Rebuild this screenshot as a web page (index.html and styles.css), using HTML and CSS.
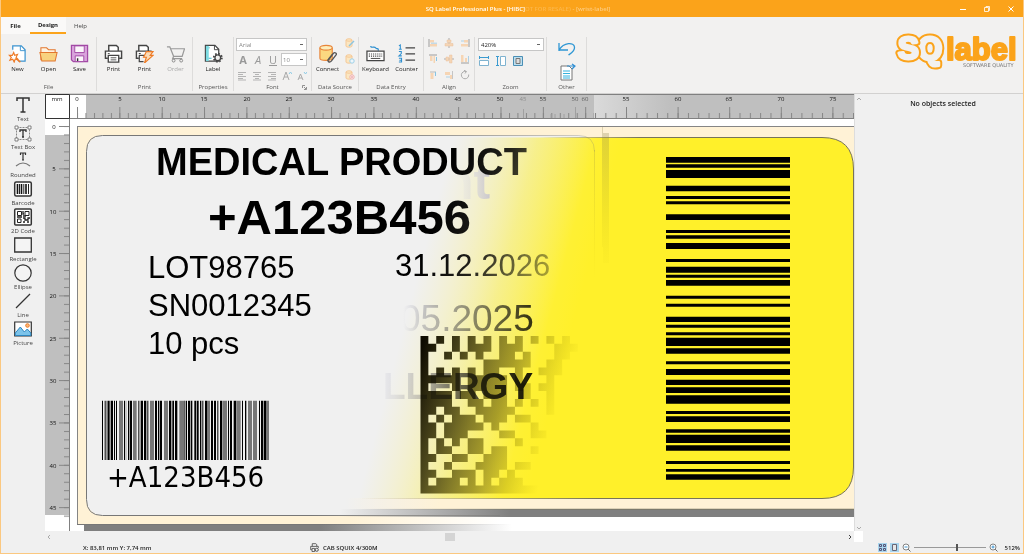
FILE: index.html
```html
<!DOCTYPE html>
<html lang="en">
<head>
<meta charset="utf-8">
<title>SQ Label Professional Plus</title>
<link rel="stylesheet" href="styles.css">
</head>
<body>
<div class="app">
  <header class="titlebar">
    <h1 class="title">SQ Label Professional Plus - [HIBC]<span class="ghost">OT FOR RESALE)</span><span class="ghost2"> - [wrist-label]</span></h1>
    <div class="winbtns">
      <button aria-label="Minimize"><svg width="8" height="8"><path d="M1 4.500h6" stroke="#fff" fill="none"/></svg></button>
      <button aria-label="Restore"><svg width="8" height="8"><path d="M1.500 2.500h4v4h-4zM3 2.500v-1h3.500v4h-1" stroke="#fff" stroke-width=".8" fill="none"/></svg></button>
      <button aria-label="Close"><svg width="8" height="8"><path d="M1.500 1.500l5 5M6.500 1.500l-5 5" stroke="#fff" fill="none"/></svg></button>
    </div>
  </header>

  <div class="ribbon">
    <div class="ribbon-main">
      <nav class="tabs">
        <button class="tab file">File</button>
        <button class="tab active">Design</button>
        <button class="tab help">Help</button>
      </nav>
      <div class="groups">
        <section class="group g-file">
          <div class="tools">
            <button class="big"><svg viewBox="0 0 20 20"><path d="M5 6V2h9l4 4v12h-7" fill="#fff" stroke="#3c94d0" stroke-width="1.300"/><path d="M13 2v5h5" fill="none" stroke="#3c94d0"/><path d="M6 9l1 3 3-1-1.500 3 2 2-3 0-1 3-1.500-3-3 1 1.500-3-2-2 3 0z" fill="#fff" stroke="#ee7a25" stroke-width="1.200"/><path d="M8 15l5 4" stroke="#ee7a25" stroke-width="1.600"/></svg>New</button>
            <button class="big"><svg viewBox="0 0 20 20"><path d="M2 17V4h6l2 2h7v4" fill="#fff3e2" stroke="#e2772f" stroke-width="1.100"/><path d="M1 9h18l-2 9H3z" fill="#f8d27f" stroke="#e2772f" stroke-width="1.100"/></svg>Open</button>
            <button class="big"><svg viewBox="0 0 20 20"><path d="M1.500 1.500h17v17h-15l-2-2z" fill="#d9a3dc" stroke="#a24aa5" stroke-width="1.300"/><path d="M5 2h10v7H5zM5.500 12.500h9v6h-9z" fill="#fbf6fb" stroke="#a24aa5"/><path d="M8 15v3" stroke="#333" stroke-width="1.500"/></svg>Save</button>
          </div><h2>File</h2>
        </section>
        <section class="group g-print">
          <div class="tools">
            <button class="big"><svg viewBox="0 0 20 20"><path d="M5 7V1.500h8l2 2V7M4 15H1.500V7.500h17V15H16" fill="#fff" stroke="#444" stroke-width="1.500"/><path d="M4.500 12h11v7h-11z" fill="#fff" stroke="#444" stroke-width="1.400"/><path d="M7 14.500h6M7 16.700h6M4 10h2" stroke="#555"/></svg>Print</button>
            <button class="big"><svg viewBox="0 0 20 20"><path d="M4 7V1.500h8l2 2V7M4 15H1.500V7.500h16" fill="#fff" stroke="#444" stroke-width="1.500"/><path d="M4 12h6M4.500 12v6.500H9M4 10h2" fill="none" stroke="#444" stroke-width="1.300"/><path d="M12 8h7l-3 4h3l-9 8 2-6h-3z" fill="#fbdcb8" stroke="#ee7a25" stroke-width="1.200"/></svg>Print</button>
            <button class="big" disabled><svg viewBox="0 0 20 20"><path d="M1 3h3l4 10h9l2.500-8H5M8 13l-1 2.500h10" fill="none" stroke="#999" stroke-width="1.300"/><circle cx="8" cy="17.500" r="1.500" fill="none" stroke="#888"/><circle cx="16" cy="17.500" r="1.500" fill="none" stroke="#888"/></svg>Order</button>
          </div><h2>Print</h2>
        </section>
        <section class="group g-prop">
          <div class="tools">
            <button class="big"><svg viewBox="0 0 20 20"><path d="M1.500 1.500h10l4 4V18h-14z" fill="#fff" stroke="#444" stroke-width="1.300"/><path d="M2 2h3v16H2z" fill="#7ddbe2"/><path d="M11 1.500V6h4.500" fill="none" stroke="#444"/><path d="M5 4h1M5 15h3" stroke="#35b2c4"/><circle cx="14.500" cy="14.500" r="4.200" fill="none" stroke="#444" stroke-width="2" stroke-dasharray="1.600 1.700"/><circle cx="14.500" cy="14.500" r="3" fill="#f2f1f0" stroke="#444" stroke-width="1.400"/></svg>Label</button>
          </div><h2>Properties</h2>
        </section>
        <section class="group g-font">
          <div class="fonttools">
            <select class="pick wide dim" aria-label="Font"><option>Arial</option></select>
            <button class="fmt" aria-label="Bold"><b>A</b></button>
            <button class="fmt" aria-label="Italic"><i>A</i></button>
            <button class="fmt" aria-label="Underline"><u>U</u></button>
            <select class="pick size dim" aria-label="Font size"><option>10</option></select>
            <div class="row">
              <button class="sm" aria-label="Align left"><svg viewBox="0 0 10 10"><path d="M1 1.500h8M1 3.500h5M1 5.500h8M1 7.500h5M1 9h8" stroke="#b4b4b4"/></svg></button>
              <button class="sm" aria-label="Align centre"><svg viewBox="0 0 10 10"><path d="M1 1.500h8M3 3.500h4M1 5.500h8M3 7.500h4M1 9h8" stroke="#b4b4b4"/></svg></button>
              <button class="sm" aria-label="Align right"><svg viewBox="0 0 10 10"><path d="M1 1.500h8M4 3.500h5M1 5.500h8M4 7.500h5M1 9h8" stroke="#b4b4b4"/></svg></button>
              <button class="sm" aria-label="Grow font"><svg viewBox="0 0 10 10"><path d="M1 9l3-8 3 8M2 6h4" fill="none" stroke="#aaa"/><path d="M7 3l1.500-2L10 3" fill="none" stroke="#8ccbe6"/></svg></button>
              <button class="sm" aria-label="Shrink font"><svg viewBox="0 0 10 10"><path d="M1 9l2.500-6L6 9M2 7h3" fill="none" stroke="#aaa"/><path d="M7 1l1.500 2L10 1" fill="none" stroke="#8ccbe6"/></svg></button>
            </div>
          </div><h2>Font</h2>
          <button class="launcher" aria-label="Font settings"><svg width="5" height="5"><path d="M.5 3V.5H3M2 2l2 2M4.500 2v2.500H2" fill="none" stroke="#777" stroke-width=".8"/></svg></button>
        </section>
        <section class="group g-data">
          <div class="tools">
            <button class="big"><svg viewBox="0 0 20 20"><path d="M2 4v11c0 3 13 3 13 0V4" fill="#fbd880" stroke="#e8853a" stroke-width="1.200"/><ellipse cx="8.500" cy="4" rx="6.500" ry="2.500" fill="#fdeebc" stroke="#e8853a" stroke-width="1.200"/><path d="M11 17l5-7c2-2 4 0 3 1.500l-5 6.500c-2 2-5 0-3-2l4-5" fill="none" stroke="#555" stroke-width="1.400"/></svg>Connect</button>
            <div class="col">
              <button class="sm" aria-label="Edit source"><svg viewBox="0 0 10 10"><path d="M1 2v6c0 1.500 6 1.500 6 0V2" fill="#fbe7c2" stroke="#f5c896"/><ellipse cx="4" cy="2" rx="3" ry="1.200" fill="#fbe7c2" stroke="#f5c896"/><path d="M4 8l5-5" stroke="#8cc4e0" stroke-width="1.500"/></svg></button>
              <button class="sm" aria-label="Refresh source"><svg viewBox="0 0 10 10"><path d="M1 2v6c0 1.500 6 1.500 6 0V2" fill="#fbe7c2" stroke="#f5c896"/><ellipse cx="4" cy="2" rx="3" ry="1.200" fill="#fbe7c2" stroke="#f5c896"/><circle cx="7" cy="7" r="2.200" fill="#eef6fa" stroke="#9dd0e8"/></svg></button>
              <button class="sm" aria-label="Remove source"><svg viewBox="0 0 10 10"><path d="M1 2v6c0 1.500 6 1.500 6 0V2" fill="#fbe7c2" stroke="#f5c896"/><ellipse cx="4" cy="2" rx="3" ry="1.200" fill="#fbe7c2" stroke="#f5c896"/><circle cx="7" cy="7" r="2.200" fill="#fdeeee" stroke="#eeb0b0"/><path d="M6 7h2" stroke="#e89090"/></svg></button>
            </div>
          </div><h2>Data Source</h2>
        </section>
        <section class="group g-entry">
          <div class="tools">
            <button class="big"><svg viewBox="0 0 20 20"><path d="M5 2c0 3 4 0 5 2s3-1 3 3" fill="none" stroke="#2d8fd0" stroke-width="1.300"/><path d="M1 7.500h18v10H1z" fill="#fff" stroke="#444" stroke-width="1.300"/><path d="M3 10.500h14M3 12.700h14" stroke="#444" stroke-width="1.200" stroke-dasharray="1.200 1"/><path d="M5 15.200h10" stroke="#444"/></svg>Keyboard</button>
            <button class="big"><svg viewBox="0 0 20 20"><path d="M9 4h10M9 10.500h10M9 17h10" stroke="#444" stroke-width="1.300"/><path d="M2 2l1.500-1v4.500M2 5.500h3M2 8h2.500v2L2 12.500h3M2 15h2.800v4H2M2.500 17h2" fill="none" stroke="#2d8fd0" stroke-width="1.100"/></svg>Counter</button>
          </div><h2>Data Entry</h2>
        </section>
        <section class="group g-align">
          <div class="grid3">
            <button class="sm" aria-label="Left"><svg viewBox="0 0 10 10"><path d="M1 1v8" stroke="#888"/><path d="M2 2h4v2.500H2zM2 6h7v2.500H2z" fill="#f8cfa6"/><path d="M3 5.200h6" stroke="#9cc9e2"/></svg></button>
            <button class="sm" aria-label="Center"><svg viewBox="0 0 10 10"><path d="M5 0v10" stroke="#999"/><path d="M3 2h4v2.500H3zM1 5.500h8V8H1z" fill="#f8cfa6" stroke="#e5b58a" stroke-width=".5"/></svg></button>
            <button class="sm" aria-label="Right"><svg viewBox="0 0 10 10"><path d="M9 1v8" stroke="#888"/><path d="M4 2h4v2.500H4zM1 6h7v2.500H1z" fill="#f8cfa6"/><path d="M1 3h3" stroke="#9cc9e2"/></svg></button>
            <button class="sm" aria-label="Top"><svg viewBox="0 0 10 10"><path d="M1 1h8" stroke="#888"/><path d="M2 2h2.500v5H2zM5.500 2H7v7H5.500z" fill="#f8cfa6"/><path d="M8.500 3v4" stroke="#6cb9e0"/></svg></button>
            <button class="sm" aria-label="Middle"><svg viewBox="0 0 10 10"><path d="M0 5h10" stroke="#999"/><path d="M2 3h2.500v4H2zM5.500 1H8v8H5.500z" fill="#f8cfa6" stroke="#e5b58a" stroke-width=".5"/></svg></button>
            <button class="sm" aria-label="Bottom"><svg viewBox="0 0 10 10"><path d="M1 9h8" stroke="#888"/><path d="M1 1h2.500v7H1zM5 4h2v4H5z" fill="#f8cfa6"/><path d="M8.500 2v6" stroke="#9cc9e2"/></svg></button>
            <button class="sm" aria-label="Horizontal spacing"><svg viewBox="0 0 10 10"><path d="M2 2h6" stroke="#aaa"/><path d="M2.500 3h3v6h-3z" fill="#f8cfa6"/><path d="M7.500 2v4" stroke="#6cb9e0"/></svg></button>
            <button class="sm" aria-label="Vertical spacing"><svg viewBox="0 0 10 10"><path d="M1 2h5v3H1zM6 5h2.500v4H6z" fill="#f8cfa6"/><path d="M2 7h4" stroke="#9cc9e2"/><path d="M8.500 1v8" stroke="#bbb"/></svg></button>
            <button class="sm" aria-label="Rotate"><svg viewBox="0 0 10 10"><path d="M6 1.500a3.700 3.700 0 1 0 2.700 3M4 .3l2.500 1.200L5 3.500" fill="none" stroke="#999"/></svg></button>
          </div><h2>Align</h2>
        </section>
        <section class="group g-zoom">
          <div class="zoomtools">
            <select class="pick" aria-label="Zoom"><option>420%</option></select>
            <div class="row">
              <button class="sm" aria-label="Fit width"><svg viewBox="0 0 10 10"><path d="M.5 0v3M9.500 0v3M1 1.500h8" stroke="#3c9bd0" fill="none"/><path d="M.5 4.500h9v5h-9z" fill="#fff" stroke="#7fb3d0"/></svg></button>
              <button class="sm" aria-label="Fit height"><svg viewBox="0 0 10 10"><path d="M0 .5h3M0 9.500h3M1.500 1v8" stroke="#3c9bd0" fill="none"/><path d="M4.500.5h5v9h-5z" fill="#fff" stroke="#7fb3d0"/></svg></button>
              <button class="sm" aria-label="Fit page"><svg viewBox="0 0 10 10"><path d="M.5.5h9v9h-9z" fill="#bfe0f0" stroke="#4a8fb5"/><path d="M3 2.500h4v5H3z" fill="#ddd" stroke="#777"/></svg></button>
            </div>
          </div><h2>Zoom</h2>
        </section>
        <section class="group g-other">
          <div class="othertools">
            <button class="med" aria-label="Undo"><svg viewBox="0 0 18 18"><path d="M1 10h9M1 11V3M1 10C6 2 16 2 16.500 7c.5 4-3 6-6 8" fill="none" stroke="#2f97d4" stroke-width="1.300"/></svg></button>
            <button class="med" aria-label="Export"><svg viewBox="0 0 18 18"><path d="M3 3h8l3 3v11H3z" fill="#fff" stroke="#777"/><path d="M5 8h7M5 10.500h7M5 13h7M5 15h7" stroke="#35b2dd" stroke-width="1.200"/><path d="M9 3h8M14 1l3 2-3 3" fill="none" stroke="#2f8fd4" stroke-width="1.200"/></svg></button>
          </div><h2>Other</h2>
        </section>
      </div>
    </div>
    <svg class="logo" width="130" height="50" role="img" aria-label="SQ label software quality">
      <g class="sq">
        <g stroke="#fba31a" stroke-width="7" fill="#fba31a"><text x="26" y="30">Q</text></g>
        <g stroke="#f2f1f0" stroke-width="3" fill="#f2f1f0"><text x="26" y="30">Q</text></g>
        <g stroke="#fba31a" stroke-width="7" fill="#fba31a"><text x="6" y="30">S</text></g>
        <g stroke="#f2f1f0" stroke-width="3" fill="#f2f1f0"><text x="6" y="30">S</text></g>
      </g>
      <text class="lbl" x="54" y="31">label</text>
      <text class="soft" x="71" y="38">SOFTWARE QUALITY</text>
    </svg>
  </div>

  <main class="work">
    <aside class="toolbox">
      <button><svg viewBox="0 0 20 18"><path d="M4 5V2h12v3M10 2v14M7.500 16h5" fill="none" stroke="#333" stroke-width="1.500"/></svg>Text</button>
      <button><svg viewBox="0 0 20 18"><path d="M3.500 3.500h13v12h-13z" fill="none" stroke="#888" stroke-dasharray="2 1"/><path d="M2 2h3v3H2zM15 2h3v3h-3zM2 14h3v3H2zM15 14h3v3h-3z" fill="#fff" stroke="#666" stroke-width=".8"/><path d="M7 8V6h6v2M10 6v7M9 13h2" fill="none" stroke="#333" stroke-width="1.300"/></svg>Text Box</button>
      <button><svg viewBox="0 0 20 18"><path d="M7.500 3V1h5v2M10 1v7M9 8h2" fill="none" stroke="#333" stroke-width="1.200"/><path d="M3 14q7-6 14 0" fill="none" stroke="#777" stroke-width="1.200"/></svg>Rounded</button>
      <button><svg viewBox="0 0 20 18"><rect x="1.700" y="2" width="16.600" height="14" rx="1.500" fill="#fff" stroke="#333" stroke-width="1.500"/><path d="M4.500 4v10M8.500 4v10M13 4v10" stroke="#111" stroke-width="1.600"/><path d="M6.500 4v10M10.800 4v10M15.500 4v10" stroke="#222" stroke-width="1"/></svg>Barcode</button>
      <button><svg viewBox="0 0 20 18"><rect x="1.700" y="1" width="16.600" height="16" rx="1" fill="#fff" stroke="#333" stroke-width="1.500"/><path d="M4.500 3.500h4v4h-4zM12 3.500h4v4h-4zM4.500 11h3.500v3.500H4.500z" fill="none" stroke="#222"/><path d="M10 3v3h1M10 8h3M4 9h5M10 10h2v2h3v-2h2M10 14h2M14 14h2" fill="none" stroke="#222" stroke-width="1.300"/></svg>2D Code</button>
      <button><svg viewBox="0 0 20 18"><path d="M1.700 2h16.600v14H1.700z" fill="#f4f4f4" stroke="#333" stroke-width="1.300"/></svg>Rectangle</button>
      <button><svg viewBox="0 0 20 18"><circle cx="10" cy="9" r="8.200" fill="#f4f4f4" stroke="#333" stroke-width="1.200"/></svg>Ellipse</button>
      <button><svg viewBox="0 0 20 18"><path d="M3 16L17 2" stroke="#333" stroke-width="1.300"/></svg>Line</button>
      <button><svg viewBox="0 0 20 18"><path d="M1.700 2h16.600v14H1.700z" fill="#fff" stroke="#333" stroke-width="1.200"/><path d="M2.300 13l5-6 4 5 3-3 3.500 4v2.500H2.300z" fill="#7cc3ea" stroke="#2d86bf"/><circle cx="14.500" cy="5.500" r="1.800" fill="#f8b878" stroke="#ee7a25"/></svg>Picture</button>
    </aside>

    <div class="editor">
      <svg class="canvas" role="img" aria-label="Label design canvas">
        <defs>
          <pattern id="tx" patternUnits="userSpaceOnUse" x="77" y="0" width="8.470" height="600"><path d="M.5 113v5" stroke="#858585"/></pattern>
          <pattern id="tX" patternUnits="userSpaceOnUse" x="77" y="0" width="42.350" height="600"><path d="M.5 107v11" stroke="#858585"/></pattern>
          <pattern id="ux" patternUnits="userSpaceOnUse" x="626" y="0" width="10.320" height="600"><path d="M.5 113v5" stroke="#858585"/></pattern>
          <pattern id="uX" patternUnits="userSpaceOnUse" x="626" y="0" width="51.600" height="600"><path d="M.5 107v11" stroke="#858585"/></pattern>
          <pattern id="ty" patternUnits="userSpaceOnUse" x="0" y="126" width="100" height="8.470"><path d="M64 .5h5" stroke="#858585"/></pattern>
          <pattern id="tY" patternUnits="userSpaceOnUse" x="0" y="126" width="100" height="42.350"><path d="M59 .5h10" stroke="#858585"/></pattern>
          <linearGradient id="rul" x1="594" x2="670" gradientUnits="userSpaceOnUse"><stop offset="0" stop-color="#dadada"/><stop offset="1" stop-color="#bfbfbf"/></linearGradient>
          <linearGradient id="yel" gradientUnits="userSpaceOnUse" x1="454" y1="137" x2="612" y2="179"><stop offset="0" stop-color="#f6f0b0" stop-opacity="0"/><stop offset=".2" stop-color="#f8f0a0" stop-opacity=".35"/><stop offset=".5" stop-color="#f9ef66" stop-opacity=".72"/><stop offset=".85" stop-color="#fff02a" stop-opacity=".95"/><stop offset="1" stop-color="#fff02a"/></linearGradient>
          <linearGradient id="blk" gradientUnits="userSpaceOnUse" x1="460" y1="137" x2="625" y2="190"><stop offset="0" stop-color="#000"/><stop offset=".3" stop-color="#000" stop-opacity=".86"/><stop offset="1" stop-color="#000" stop-opacity="0"/></linearGradient>
          <linearGradient id="mtx" gradientUnits="userSpaceOnUse" x1="425" y1="336" x2="572" y2="382"><stop offset="0" stop-color="#0d0a00"/><stop offset=".25" stop-color="#2e2900" stop-opacity=".85"/><stop offset=".6" stop-color="#6d6200" stop-opacity=".58"/><stop offset="1" stop-color="#b0a000" stop-opacity="0"/></linearGradient>
          <linearGradient id="lil" gradientUnits="userSpaceOnUse" x1="403" x2="535" y1="0" y2="0"><stop offset="0" stop-color="#dedee6" stop-opacity="0"/><stop offset=".15" stop-color="#d0d0da"/><stop offset=".6" stop-color="#85858f"/><stop offset="1" stop-color="#303036"/></linearGradient>
          <linearGradient id="alg" gradientUnits="userSpaceOnUse" x1="384" x2="535" y1="0" y2="0"><stop offset="0" stop-color="#e4e4ec" stop-opacity=".3"/><stop offset=".24" stop-color="#ceced8"/><stop offset=".4" stop-color="#8c8c9a"/><stop offset=".65" stop-color="#44444e"/><stop offset="1" stop-color="#18181c"/></linearGradient>
          <linearGradient id="nt" gradientUnits="userSpaceOnUse" x1="454" x2="492" y1="0" y2="0"><stop offset="0" stop-color="#e4e4ea" stop-opacity="0"/><stop offset="1" stop-color="#c6c3cc"/></linearGradient>
          <linearGradient id="in" gradientUnits="userSpaceOnUse" x1="340" x2="510" y1="0" y2="0"><stop offset="0" stop-color="#7f7f7f" stop-opacity="0"/><stop offset="1" stop-color="#7f7f7f"/></linearGradient>
          <linearGradient id="out" gradientUnits="userSpaceOnUse" x1="320" x2="512" y1="0" y2="0"><stop offset="0" stop-color="#7f7f7f"/><stop offset="1" stop-color="#fff"/></linearGradient>
          <linearGradient id="edge" gradientUnits="userSpaceOnUse" x1="320" x2="512" y1="0" y2="0"><stop offset="0" stop-color="#777"/><stop offset="1" stop-color="#777" stop-opacity="0"/></linearGradient>
          <linearGradient id="crm" gradientUnits="userSpaceOnUse" x1="350" x2="500" y1="0" y2="0"><stop offset="0" stop-color="#fff2d6"/><stop offset="1" stop-color="#fff"/></linearGradient>
          <linearGradient id="crmin" gradientUnits="userSpaceOnUse" x1="345" x2="440" y1="0" y2="0"><stop offset="0" stop-color="#fff2d6" stop-opacity="0"/><stop offset="1" stop-color="#fff2d6"/></linearGradient>
          <linearGradient id="ln" gradientUnits="userSpaceOnUse" x1="360" x2="600" y1="0" y2="0"><stop offset="0" stop-color="#77745a" stop-opacity="0"/><stop offset="1" stop-color="#77745a"/></linearGradient>
          <linearGradient id="lt" gradientUnits="userSpaceOnUse" x1="540" x2="640" y1="0" y2="0"><stop offset="0" stop-color="#77745a" stop-opacity="0"/><stop offset="1" stop-color="#77745a"/></linearGradient>
          <linearGradient id="lnl" gradientUnits="userSpaceOnUse" x1="86" x2="640" y1="0" y2="60"><stop offset=".5" stop-color="#777"/><stop offset="1" stop-color="#777" stop-opacity=".15"/></linearGradient>
          <linearGradient id="dn" x1="0" x2="0" y1="0" y2="1"><stop offset="0" stop-color="#8a8050" stop-opacity=".3"/><stop offset="1" stop-color="#c0b000" stop-opacity="0"/></linearGradient>
        </defs>
        <g transform="translate(-45 -94)">
          <path d="M45 94h809v438H45z" fill="#fff"/>
          <!-- pages and their shadows -->
          <path d="M77 126h777v398H77z" fill="#fff2d6"/>
          <path d="M340 524.500h514v7H340z" fill="#fff"/>
          <path d="M84 524.500h428v7H84z" fill="url(#out)"/>
          <path d="M77 126.500h777M77.500 126v398" fill="none" stroke="#858585"/>
          <path d="M77 524h435v1H77z" fill="url(#edge)"/>
          <rect x="86.500" y="135.500" width="508" height="380" rx="16" fill="#f0f0f0"/>
          <path d="M340 516h514v8H340z" fill="url(#crm)"/>
          <path d="M345 498h509v11H345z" fill="url(#crmin)"/>
          <path d="M340 509h514v8H340z" fill="url(#in)"/>
          <path d="M360 508.800h494v.8H360z" fill="url(#ln)"/>
          <path d="M350 137.500H822Q853.500 137.500 853.500 169V467Q853.500 498.500 822 498.500H350z" fill="url(#yel)"/>
          <path d="M360 498h462v1H360z" fill="url(#ln)"/>
          <path d="M540 137h282v1H540z" fill="url(#lt)"/>
          <path d="M822 137.500q31.500 0 31.500 31.500v298q0 31.500-31.500 31.500" fill="none" stroke="#77745a"/>
          <path d="M500 515.500H102.500q-16 0-16-16v-348q0-16 16-16h476q16 0 16 16" fill="none" stroke="url(#lnl)"/>
          <path d="M594 150h1v130h-1zM602 127h1v120h-1zM603 133h6v130h-6z" fill="url(#dn)"/>
          <text class="b" x="443" y="199" font-size="50" fill="url(#nt)">nt</text>
          <!-- left label texts -->
          <g fill="url(#blk)">
            <text class="b" x="156" y="175" font-size="38">MEDICAL PRODUCT</text>
            <text class="b" x="208" y="234" font-size="49">+A123B456</text>
            <text x="148" y="278" font-size="31">LOT98765</text>
            <text x="148" y="316" font-size="31">SN0012345</text>
            <text x="148" y="354" font-size="31">10 pcs</text>
            <text x="395" y="276" font-size="31">31.12.2026</text>
          </g>
          <g transform="translate(80 400)scale(.33333)">
            <path d="M66 2h3v178h-3zM74 2h3v178h-3zM84 2h5v178h-5zM92 2h7v178h-7zM102 2h3v178h-3zM108 2h3v178h-3zM132 2h3v178h-3zM144 2h3v178h-3zM149 2h7v178h-7zM175 2h3v178h-3zM182 2h7v178h-7zM192 2h7v178h-7zM202 2h3v178h-3zM225 2h6v178h-6zM234 2h4v178h-4zM240 2h6v178h-6zM267 2h7v178h-7zM277 2h5v178h-5zM285 2h7v178h-7zM313 2h3v178h-3zM318 2h3v178h-3zM324 2h7v178h-7zM333 2h4v178h-4zM343 2h5v178h-5zM350 2h6v178h-6zM360 2h4v178h-4zM367 2h3v178h-3zM375 2h6v178h-6zM393 2h6v178h-6zM402 2h6v178h-6zM412 2h3v178h-3zM420 2h6v178h-6zM444 2h3v178h-3zM450 2h6v178h-6zM461 2h8v178h-8zM486 2h3v178h-3zM495 2h4v178h-4zM537 2h3v178h-3zM543 2h6v178h-6zM551 2h7v178h-7z"/>
            <path fill="#777" d="M79 2h5v178h-5zM117 2h12v178h-12zM137 2h2v178h-2zM159 2h11v178h-11zM210 2h12v178h-12zM252 2h12v178h-12zM298 2h15v178h-15zM381 2h9v178h-9zM427 2h14v178h-14zM470 2h12v178h-12zM504 2h12v178h-12zM519 2h12v178h-12zM558 2h9v178h-9z"/>
          </g>
          <text class="tah" x="107" y="487" font-size="29">+A123B456</text>
          <!-- data matrix, one unit per module -->
          <clipPath id="dm"><path transform="translate(420.500 336)scale(7.870)" d="M0 0h1v20h-1zM2 0h1v1h-1zM4 0h1v2h-1zM6 0h1v2h-1zM8 0h1v2h-1zM10 0h1v4h-1zM12 0h1v2h-1zM14 0h1v1h-1zM16 0h1v1h-1zM18 0h1v3h-1zM1 1h1v1h-1zM7 1h1v2h-1zM11 1h1v3h-1zM17 1h1v4h-1zM19 1h1v1h-1zM3 2h1v1h-1zM5 2h1v1h-1zM13 2h1v2h-1zM8 3h2v2h-2zM12 3h1v2h-1zM16 3h1v3h-1zM2 4h1v2h-1zM4 4h1v3h-1zM6 4h1v4h-1zM15 4h1v1h-1zM1 5h1v1h-1zM3 5h1v1h-1zM7 5h2v2h-2zM9 5h2v2h-2zM12 5h1v2h-1zM1 7h3v2h-3zM5 7h1v1h-1zM8 7h3v1h-3zM15 6h2v1h-2zM13 6h1v2h-1zM16 7h1v3h-1zM6 8h2v1h-2zM9 8h2v3h-2zM12 8h1v1h-1zM14 8h1v1h-1zM1 9h1v1h-1zM3 9h2v1h-2zM7 9h2v1h-2zM11 9h1v1h-1zM2 10h1v1h-1zM4 10h3v1h-3zM8 10h1v1h-1zM12 10h2v1h-2zM1 11h1v2h-1zM3 11h5v1h-5zM9 11h1v1h-1zM14 11h1v2h-1zM3 12h3v1h-3zM10 12h2v1h-2zM15 12h1v1h-1zM2 13h1v2h-1zM4 13h1v1h-1zM6 13h2v2h-2zM12 13h1v1h-1zM3 14h1v1h-1zM9 14h2v3h-2zM14 14h1v1h-1zM1 15h1v1h-1zM4 15h2v1h-2zM8 15h1v4h-1zM3 16h1v1h-1zM7 16h1v1h-1zM12 16h2v1h-2zM1 17h1v1h-1zM4 17h3v1h-3zM9 17h1v1h-1zM11 17h1v1h-1zM2 18h3v1h-3zM6 18h1v1h-1zM10 18h3v1h-3zM1 19h19v1h-19z"/></clipPath>
          <path d="M420 335h160v160H420z" fill="url(#mtx)" clip-path="url(#dm)"/>
          <!-- second label texts -->
          <g class="mul">
            <text x="400" y="331" font-size="37" fill="url(#lil)">05.2025</text>
            <text class="b" x="383" y="399" font-size="37" fill="url(#alg)">LLERGY</text>
          </g>
          <path transform="translate(640 140)scale(.33333)" d="M78 51h372v17H78zM78 73h372v10H78zM78 90h372v24H78zM78 137h372v17H78zM78 168h372v9H78zM78 184h372v9H78zM78 223h372v17H78zM78 270h372v9H78zM78 286h372v10H78zM78 309h372v18H78zM78 357h372v9H78zM78 380h372v18H78zM78 404h372v9H78zM78 420h372v17H78zM78 467h372v9H78zM78 491h372v9H78zM78 530h372v16H78zM78 554h372v9H78zM78 577h372v9H78zM78 593h372v25H78zM78 625h372v16H78zM78 664h372v9H78zM78 687h372v18H78zM78 719h372v16H78zM78 742h372v17H78zM78 766h372v25H78zM78 813h372v9H78zM78 829h372v17H78zM78 868h372v10H78zM78 884h372v25H78zM78 916h372v16H78zM78 963h372v9H78zM78 987h372v8H78zM78 1003h372v16H78z"/>
          <!-- rulers -->
          <path d="M86 95h768v23H86z" fill="#bfbfbf"/>
          <path d="M594 95h260v23H594z" fill="url(#rul)"/>
          <path d="M77 95h517v23H77z" fill="url(#tx)"/><path d="M77 95h517v23H77z" fill="url(#tX)"/>
          <path d="M595 95h259v23H595z" fill="url(#ux)"/><path d="M626 95h228v23H626z" fill="url(#uX)"/>
          <path d="M523.500 109v9M575.500 107v11M551 114v4M555 114v4M564 114v4" stroke="#a0a0a0"/>
          <path d="M69 118.500h785M45 94.500h809" stroke="#808080"/>
          <path d="M45 135h24v380H45z" fill="#bfbfbf"/>
          <path d="M45 126h24v398H45z" fill="url(#ty)"/><path d="M45 126h24v398H45z" fill="url(#tY)"/>
          <path d="M69.500 119v413" stroke="#808080"/>
          <path d="M45.500 94.500h24v24h-24z" fill="#fff" stroke="#333"/>
          <g class="rl">
            <text x="57" y="101">mm</text><text x="77" y="101">0</text><text x="120" y="101">5</text><text x="162" y="101">10</text><text x="204" y="101">15</text><text x="247" y="101">20</text><text x="289" y="101">25</text><text x="331" y="101">30</text><text x="374" y="101">35</text><text x="416" y="101">40</text><text x="458" y="101">45</text><text x="500" y="101">50</text><text x="523" y="101" opacity=".3">45</text><text x="543" y="101" opacity=".8">55</text><text x="575" y="101" opacity=".6">50</text><text x="585" y="101" opacity=".6">60</text><text x="626" y="101">55</text><text x="678" y="101">60</text><text x="729" y="101">65</text><text x="781" y="101">70</text><text x="833" y="101">75</text>
            <text x="54" y="129">0</text><text x="54" y="171">5</text><text x="53" y="214">10</text><text x="53" y="256">15</text><text x="53" y="298">20</text><text x="53" y="341">25</text><text x="53" y="383">30</text><text x="53" y="425">35</text><text x="53" y="468">40</text><text x="53" y="510">45</text>
          </g>
        </g>
      </svg>
      <div class="vscroll"><button aria-label="Scroll up"><svg width="6" height="4"><path d="M1 3l2-2 2 2" fill="none" stroke="#aaa"/></svg></button><button aria-label="Scroll down"><svg width="6" height="4"><path d="M1 1l2 2 2-2" fill="none" stroke="#aaa"/></svg></button></div>
      <div class="hscroll"><button aria-label="Scroll left"><svg width="4" height="6"><path d="M3 1L1 3l2 2" fill="none" stroke="#aaa"/></svg></button><span class="thumb"></span><button aria-label="Scroll right"><svg width="4" height="6"><path d="M1 1l2 2-2 2" fill="none" stroke="#444"/></svg></button></div>
      <div class="corner"></div>
    </div>

    <aside class="props"><p>No objects selected</p></aside>
  </main>

  <footer class="status">
    <span class="pos">X: 83,81 mm Y: 7,74 mm</span>
    <span class="printer"><svg width="9" height="9" viewBox="0 0 20 20"><path d="M5 7V1.500h8l2 2V7M4 15H1.500V7.500h17V11M4.500 12h6v7h-6z" fill="none" stroke="#444" stroke-width="1.800"/><circle cx="15" cy="15" r="3.500" fill="none" stroke="#444" stroke-width="2"/></svg>CAB SQUIX 4/300M</span>
    <span class="zoombar">
      <button class="view" aria-label="Grid view"><svg width="9" height="9"><path d="M1.500 1.500h2v2h-2zM5.500 1.500h2v2h-2zM1.500 5.500h2v2h-2zM5.500 5.500h2v2h-2z" fill="none" stroke="#557"/></svg></button>
      <button class="view" aria-label="Page view"><svg width="9" height="9"><path d="M2.500 1.500h4v6h-4z" fill="#e6e6e6" stroke="#667"/></svg></button>
      <button aria-label="Zoom out"><svg width="9" height="9"><circle cx="4" cy="4" r="3" fill="#fff" stroke="#666" stroke-width=".8"/><path d="M6.200 6.200L8.500 8.500" stroke="#666"/><path d="M2.500 4h3" stroke="#3c94d0"/></svg></button>
      <input type="range" min="0" max="100" value="60" aria-label="Zoom level">
      <button aria-label="Zoom in"><svg width="9" height="9"><circle cx="4" cy="4" r="3" fill="#fff" stroke="#666" stroke-width=".8"/><path d="M6.200 6.200L8.500 8.500" stroke="#666"/><path d="M2.500 4h3M4 2.500v3" stroke="#3c94d0"/></svg></button>
      <span class="pct">512%</span>
    </span>
  </footer>
</div>
</body>
</html>
```
FILE: styles.css
```css
* { box-sizing: border-box; }
body {
  margin: 0;
  background: #f0f0f0;
  color: #222;
  font: 6px/8px "Open Sans", "Noto Sans", sans-serif;
}
button {
  margin: 0;
  padding: 0;
  border: 0;
  background: none;
  color: inherit;
  font: inherit;
}
h1, h2, p { margin: 0; font: inherit; }
svg { display: block; }

.app {
  display: flex;
  flex-direction: column;
  height: 100vh;
  border: solid #fbc880;
  border-width: 0 1px 1px;
}

/* title bar */
.titlebar {
  display: grid;
  grid-template-columns: 1fr auto 1fr;
  align-items: center;
  flex: none;
  height: 17px;
  background: #fba31a;
}
.title {
  grid-column: 2;
  padding-left: 12px;
  color: #fff;
  font-weight: 600;
  white-space: pre;
}
.ghost { color: #fcb74a; }
.ghost2 { color: #fdcb7d; }
.winbtns {
  display: flex;
  justify-content: flex-end;
  gap: 16px;
  padding-right: 8px;
}

/* ribbon */
.ribbon {
  display: flex;
  justify-content: space-between;
  flex: none;
  height: 77px;
  background: #f2f1f0;
  border-bottom: 1px solid #d2d1d0;
}
.tabs { display: flex; height: 17px; }
.tab {
  width: 29px;
  font-weight: 700;
  color: #222;
}
.tab.file { background: #faf9f8; }
.tab.active {
  width: 36px;
  background: #faf9f8;
  border-bottom: 1px solid #fba31a;
  box-shadow: inset 0 -1px #fba31a;
}
.tab.help { font-weight: 400; color: #444; }
.groups { display: flex; padding-top: 3px; }
.group {
  display: flex;
  flex-direction: column;
  justify-content: space-between;
  align-items: center;
  position: relative;
  height: 54px;
  border-right: 1px solid #dddcdb;
}
.group h2 { color: #555; }
.tools { display: flex; padding-top: 7px; }
.big {
  display: flex;
  flex-direction: column;
  align-items: center;
  gap: 2px;
  width: 31px;
}
.big svg { width: 19px; height: 19px; }
.big:disabled { color: #aaa; }
.g-file { width: 96px; }
.g-print { width: 96px; }
.g-prop { width: 41px; }
.g-font { width: 78px; }
.g-data { width: 47px; }
.g-entry { width: 65px; }
.g-align { width: 51px; }
.g-zoom { width: 72px; }
.g-other { width: 40px; }

.sm { width: 10px; height: 10px; }
.sm svg { width: 10px; height: 10px; }
.fonttools {
  display: grid;
  grid-template-columns: 14px 14px 14px 26px;
  gap: 2px 1px;
  align-self: flex-start;
  padding: 1px 0 0 2px;
}
.pick {
  appearance: none;
  height: 13px;
  margin: 0;
  padding: 0 2px;
  border: 1px solid #c6c6c6;
  border-radius: 0;
  background: #fff linear-gradient(#666, #666) no-repeat right 3px center / 3px 1px;
  color: #222;
  font: inherit;
}
.pick.dim { color: #888; }
.pick.wide { grid-column: 1 / -1; }
.pick.size { padding: 0 1px; }
.fmt { color: #999; font-size: 11px; line-height: 13px; }
.row { display: flex; gap: 5px; grid-column: 1 / -1; padding: 3px 1px 0; }
.launcher { position: absolute; right: 4px; bottom: 1px; }
.g-data .tools { padding-top: 0; }
.g-data .big { width: 29px; padding-top: 7px; }
.col { display: flex; flex-direction: column; gap: 6px; padding-top: 1px; width: 15px; align-items: center; }
.grid3 { display: grid; grid-template-columns: repeat(3, 10px); gap: 6px; padding-top: 1px; opacity: .8; }
.zoomtools { display: flex; flex-direction: column; gap: 2px; align-self: flex-start; padding: 1px 0 0 3px; }
.zoomtools .pick { width: 66px; }
.zoomtools .row { gap: 7px; }
.othertools { display: flex; flex-direction: column; gap: 5px; padding-top: 3px; }
.med { width: 18px; height: 18px; }
.med svg { width: 18px; height: 18px; }

.logo { margin: 12px 1px 0 0; }
.sq text {
  font: bold 31px "Liberation Sans", Arial, sans-serif;
  stroke-linejoin: round;
}
.lbl {
  font: bold 31px "Liberation Sans", Arial, sans-serif;
  fill: #fba31a;
  stroke: #fba31a;
  stroke-width: 2px;
  stroke-linejoin: round;
}
.soft { font: 5px "DejaVu Sans", sans-serif; fill: #777; }

/* work area */
.work {
  display: grid;
  grid-template-columns: 44px 1fr 160px;
  flex: 1;
  min-height: 0;
}
.toolbox {
  display: flex;
  flex-direction: column;
  padding-top: 2px;
  overflow: hidden;
}
.toolbox button {
  display: flex;
  flex-direction: column;
  align-items: center;
  gap: 1px;
  flex: none;
  height: 28px;
  color: #444;
}
.toolbox svg { width: 20px; height: 18px; }
.editor {
  display: grid;
  grid-template: 1fr 11px / 1fr 9px;
  min-width: 0;
  min-height: 0;
}
.canvas {
  width: 100%;
  height: 100%;
  min-height: 0;
  overflow: hidden;
  font-family: "Liberation Sans", Arial, sans-serif;
}
.canvas .b { font-weight: 700; }
.canvas .tah { font-family: "DejaVu Sans Condensed", "DejaVu Sans", sans-serif; }
.mul { mix-blend-mode: multiply; }
.rl { font: 6px "Open Sans", sans-serif; text-anchor: middle; fill: #111; }
.vscroll {
  display: flex;
  flex-direction: column;
  justify-content: space-between;
  align-items: center;
  padding: 3px 0 1px;
  border-left: 1px solid #ddd;
}
.hscroll {
  display: flex;
  justify-content: space-between;
  align-items: center;
  padding: 0 2px;
}
.thumb { width: 10px; height: 8px; background: #d4d4d4; }
.corner { background: #fff; }
.props {
  padding-top: 6px;
  font-size: 7px;
  font-weight: 600;
  text-align: center;
}

/* status bar */
.status {
  display: grid;
  grid-template-columns: 309px 1fr auto;
  align-items: center;
  flex: none;
  height: 11px;
  font-weight: 600;
}
.pos { padding-left: 82px; }
.printer { display: flex; align-items: center; gap: 4px; }
.zoombar { display: flex; align-items: center; gap: 3px; padding-right: 3px; }
.view { background: #a9d5ee; }
.zoombar input {
  appearance: none;
  width: 72px;
  height: 9px;
  margin: 0;
  background: linear-gradient(#999, #999) no-repeat center / 100% 1px;
}
.zoombar input::-webkit-slider-thumb {
  appearance: none;
  width: 2px;
  height: 7px;
  background: #555;
}
.pct { padding-left: 4px; }
```
